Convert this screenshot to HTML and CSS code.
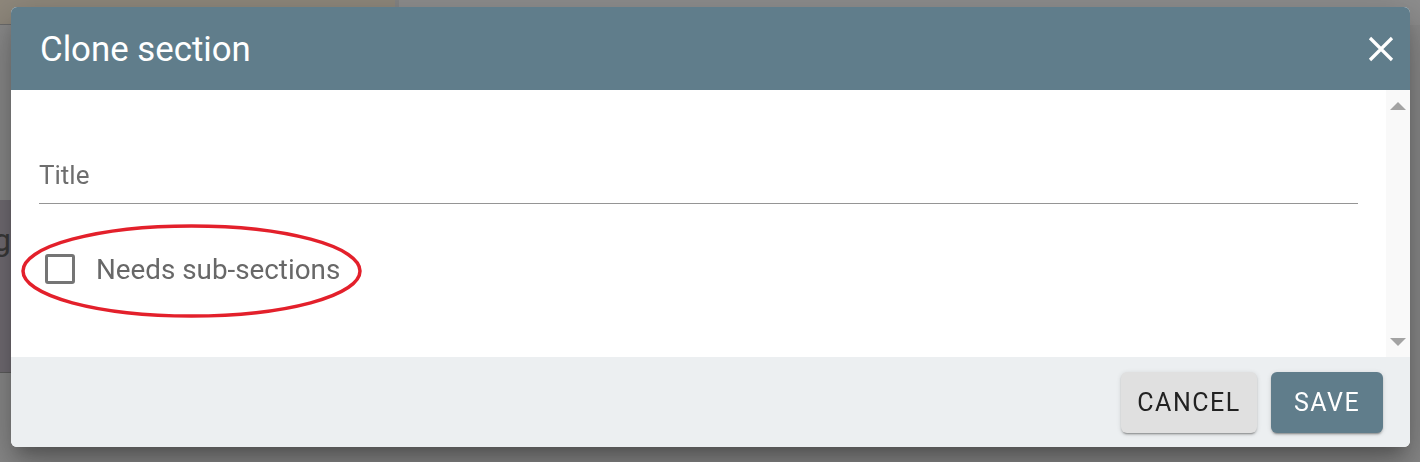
FILE: index.html
```html
<!DOCTYPE html>
<html>
<head>
	<title>Clone section</title>
	<link rel="stylesheet" href="styles.css">
</head>

<body>
	<!-- page behind the dialog, already dimmed by the backdrop -->
	<div class="page">
		<div class="page-top">
			<div class="crumb"></div>
			<div class="crumb-rest"></div>
		</div>
		<div class="page-row">
			<div class="side-card"><span class="side-text">g</span></div>
		</div>
	</div>

	<div class="dialog">
		<div class="dialog-header">
			<h2 class="dialog-title">Clone section</h2>
			<button class="close-btn" aria-label="Close">
				<svg width="26" height="26" viewBox="0 0 26 26">
					<path d="M2 2 24 24M24 2 2 24" stroke="#fff" stroke-width="3.2" fill="none"/>
				</svg>
			</button>
		</div>

		<div class="dialog-body">
			<div class="dialog-content">
				<div class="field">
					<label class="field-label">Title</label>
				</div>
				<label class="check-row">
					<span class="check-box"></span>
					<span class="check-label">Needs sub-sections</span>
				</label>
			</div>
			<div class="scrollbar">
				<span class="arrow-up"></span>
				<span class="arrow-down"></span>
			</div>
		</div>

		<div class="dialog-footer">
			<button class="btn btn-cancel">CANCEL</button>
			<button class="btn btn-save">SAVE</button>
		</div>
	</div>

	<!-- red annotation ring -->
	<svg class="callout" width="345" height="98" viewBox="0 0 345 98">
		<ellipse cx="170.5" cy="49" rx="168.5" ry="45" fill="none" stroke="#e3202b" stroke-width="3.5"/>
	</svg>
</body>
</html>
```

FILE: styles.css
```css
body {
	margin: 0;
	width: 1420px;
	height: 462px;
	overflow: hidden;
	background: #8a8a8a;
	font-family: Roboto, "Liberation Sans", sans-serif;
}

.page-top {
	display: flex;
	height: 25px;
}

.crumb {
	width: 395px;
	background: #8f887c;
	border-bottom: 1px solid #6c6c6c;
}

.crumb-rest {
	flex: 1;
	background: #8e8e8e;
	border-left: 4px solid #858585;
}

.page-row {
	padding-top: 175px;
}

.side-card {
	width: 40px;
	height: 172px;
	background: #726d74;
	border-bottom: 1px solid #5e5e5e;
}

.side-text {
	display: block;
	margin-left: -7px;
	padding-top: 22px;
	font-size: 32px;
	line-height: 36px;
	color: #3a3a3a;
}

.dialog {
	position: fixed;
	left: 11px;
	top: 7px;
	width: 1399px;
	height: 440px;
	display: flex;
	flex-direction: column;
	border-radius: 6px;
	overflow: hidden;
	background: #fff;
	box-shadow: 0 11px 15px -7px rgba(0,0,0,.25), 0 24px 38px 3px rgba(0,0,0,.18), 0 9px 46px 8px rgba(0,0,0,.12);
}

.dialog-header {
	height: 83px;
	flex: none;
	display: flex;
	align-items: center;
	justify-content: space-between;
	padding: 0 16px 0 29px;
	background: #607d8b;
}

.dialog-title {
	margin: 0;
	font-size: 34.8px;
	font-weight: 400;
	color: #fff;
}

.close-btn {
	padding: 0;
	border: 0;
	background: none;
	display: flex;
}

.dialog-body {
	flex: 1;
	display: flex;
}

.dialog-content {
	flex: 1;
	padding: 70px 28px 0;
}

.field {
	padding-bottom: 13px;
	border-bottom: 1px solid #959595;
}

.field-label {
	display: block;
	font-size: 26px;
	line-height: 30px;
	color: #6e6e6e;
}

.check-row {
	display: flex;
	align-items: center;
	margin-top: 50px;
	height: 30px;
}

.check-box {
	width: 24px;
	height: 24px;
	margin-left: 6px;
	border: 3px solid #757575;
	border-radius: 3px;
}

.check-label {
	margin-left: 21px;
	font-size: 27.8px;
	color: #686868;
}

.scrollbar {
	width: 24px;
	flex: none;
	display: flex;
	flex-direction: column;
	justify-content: space-between;
	align-items: center;
	padding: 12px 0 11px;
	background: #f9f9f9;
}

.arrow-up {
	border-left: 8px solid transparent;
	border-right: 8px solid transparent;
	border-bottom: 8px solid #a3a3a3;
}

.arrow-down {
	border-left: 8px solid transparent;
	border-right: 8px solid transparent;
	border-top: 8px solid #a3a3a3;
}

.dialog-footer {
	height: 90px;
	flex: none;
	display: flex;
	align-items: center;
	justify-content: flex-end;
	gap: 14px;
	padding-right: 27px;
	background: #eceff1;
}

.btn {
	height: 61px;
	border: 0;
	border-radius: 6px;
	font-family: Roboto, "Liberation Sans", sans-serif;
	font-size: 25px;
	letter-spacing: 1.5px;
	box-shadow: 0 3px 1px -2px rgba(0,0,0,.2), 0 2px 2px 0 rgba(0,0,0,.14), 0 1px 5px 0 rgba(0,0,0,.12);
}

.btn-cancel {
	width: 136px;
	background: #e0e0e0;
	color: #222;
}

.btn-save {
	width: 112px;
	background: #607d8b;
	color: #fff;
}

.callout {
	position: absolute;
	left: 21px;
	top: 222px;
}
```
